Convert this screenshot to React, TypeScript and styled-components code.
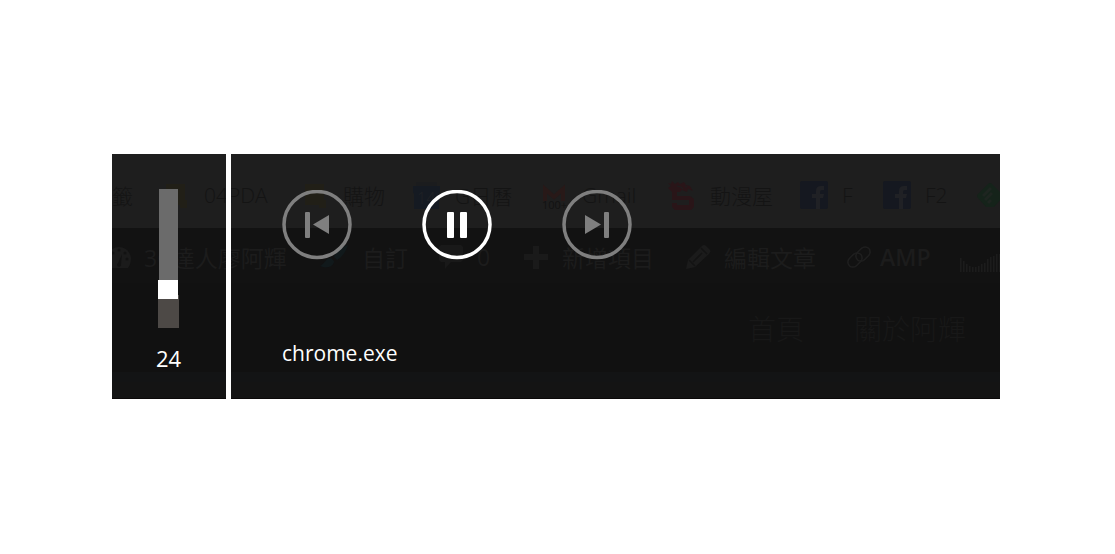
import React, { useState } from "react";
import styled, { createGlobalStyle } from "styled-components";

const GlobalStyle = createGlobalStyle`
  * { box-sizing: border-box; }
  body {
    margin: 0;
    background: #ffffff;
    font-family: "Open Sans", "Noto Sans CJK TC", sans-serif;
  }
`;

const Page = styled.main`
  padding: 154px 115px 0 112px;
`;

const Overlay = styled.section`
  display: grid;
  overflow: hidden;
  background: #111111;
`;

const Backdrop = styled.div`
  grid-area: 1 / 1;
  min-width: 0;
  overflow: hidden;
  display: flex;
  flex-direction: column;
  white-space: nowrap;
  border-bottom: 1px solid #0b0909;
`;

const Strip = styled.div`
  display: flex;
  align-items: center;
  flex: none;
`;

const BookmarkBar = styled(Strip)`
  height: 74px;
  padding-top: 8px;
  background: #1e1e1e;
  color: #141414;
  font-size: 21px;
  font-weight: 300;
`;

const AdminBar = styled(Strip)`
  height: 55px;
  padding-top: 2px;
  background: #121212;
  color: #1c1c1c;
  font-size: 23px;
`;

const SiteNav = styled(Strip)`
  height: 89px;
  justify-content: flex-end;
  gap: 50px;
  padding: 0 34px 0 0;
  background: #111111;
  color: #181818;
  font-size: 28px;
  font-weight: 300;
`;

const SiteFooter = styled.div`
  flex: 1;
  background: #141414;
  border-top: 10px solid #131415;
`;

const Item = styled.span<{ $width: number; $gap?: number; $bold?: boolean }>`
  display: flex;
  align-items: center;
  flex: none;
  width: ${(p) => p.$width}px;
  gap: ${(p) => p.$gap ?? 14}px;
  font-weight: ${(p) => (p.$bold ? 600 : "inherit")};
  svg { flex: none; overflow: visible; }
`;

const Panels = styled.div`
  grid-area: 1 / 1;
  z-index: 1;
  display: flex;
  color: #ffffff;
  font-size: 22px;
  line-height: 28px;
`;

const VolumePanel = styled.div`
  width: 114px;
  display: flex;
  flex-direction: column;
  align-items: center;
  padding: 35px 1px 27px 0;
  gap: 16px;
`;

const VolumeSlider = styled.input<{ $rest: number }>`
  appearance: none;
  writing-mode: vertical-lr;
  direction: rtl;
  width: 21px;
  height: 139px;
  margin: 0;
  cursor: pointer;
  background:
    linear-gradient(#6b6b6b, #6b6b6b) 1px 0 / 19px ${(p) => p.$rest}% no-repeat,
    linear-gradient(#4d4946, #4d4946) 0 100% / 21px ${(p) => 100 - p.$rest}% no-repeat;

  &::-webkit-slider-thumb {
    appearance: none;
    width: 20px;
    height: 19px;
    margin-right: 1px;
    border: 0;
    border-radius: 0;
    background: #ffffff;
  }
`;

const MediaPanel = styled.div`
  flex: 1;
  border-left: 5px solid #ffffff;
  padding: 36px 51px 32px;
  display: flex;
  flex-direction: column;
  gap: 79px;
`;

const Controls = styled.div`
  display: flex;
  gap: 70px;
`;

const MediaButton = styled.button<{ $active?: boolean }>`
  width: 70px;
  height: 70px;
  padding: 0;
  border: 0;
  border-radius: 50%;
  background: transparent;
  color: ${(p) => (p.$active ? "#ffffff" : "#7f7f7f")};
  cursor: pointer;
  svg { display: block; }
`;

const AppName = styled.div`
  font-size: 21px;
`;

const Ring = ({ children }: { children: React.ReactNode }) => (
  <svg width="70" height="70" viewBox="0 0 70 70" fill="currentColor" aria-hidden="true">
    <circle cx="35" cy="34.5" r="33" fill="none" stroke="currentColor" strokeWidth="3.5" />
    {children}
  </svg>
);

const NoteIcon = () => (
  <svg width="28" height="28" viewBox="0 0 28 28" fill="#211f17">
    <path d="M4 3h19v16h2v8h-7v-3H4z" />
  </svg>
);

const CalendarIcon = () => (
  <svg width="28" height="28" viewBox="0 0 28 28">
    <path d="M0 5h27v6l-1 2v15H1V13l-1-2z" fill="#151a22" />
    <path d="M3 1h21v4H3z" fill="#1b1c1e" />
    <text x="4" y="23" fontSize="16" fill="#202226">14</text>
  </svg>
);

const MailIcon = () => (
  <svg width="28" height="28" viewBox="0 0 28 28">
    <path d="M5 20V8l9 8 9-8v12" fill="none" stroke="#281918" strokeWidth="4" />
    <text x="2" y="28" fontSize="11" fontWeight="400" fill="#121212">100+</text>
  </svg>
);

const DragonIcon = () => (
  <svg width="28" height="28" viewBox="0 0 28 28" fill="#291518">
    <path d="M0 2l3 1 1-3 3 3 3-2 2 2 4-2 2 3 4 1 3 5-5-2-1 3-5-2-2 2H9v4h13l4 3v8l-3 3H7l-3-3v-4h5v2h12v-5H4v-8L0 7l3-2z" />
    <path d="M9 5l4 1 2 2M17 5l2 1" fill="none" stroke="#1e1e1e" />
  </svg>
);

const FacebookIcon = () => (
  <svg width="28" height="28" viewBox="0 0 28 28">
    <rect width="28" height="28" rx="2" fill="#151820" />
    <path d="M16 28V17h-4v-4h4v-3q0-5 5-5h3v4h-2q-2 0-2 2v2h4l-1 4h-3v11z" fill="#202125" />
  </svg>
);

const FeedIcon = () => (
  <svg width="28" height="28" viewBox="0 0 28 28">
    <path d="M12 3q2-2 4 0l10 10q2 2 0 4l-8 9h-8l-8-9q-2-2 0-4z" fill="#15231a" />
    <path d="M7 15l8-8M9 19l7-7M12 22l3-3" stroke="#1e2520" strokeWidth="3" />
  </svg>
);

const GaugeIcon = () => (
  <svg width="24" height="24" viewBox="0 0 24 24">
    <path d="M-2 23q-3-4-3-9a12 12 0 0 1 24 0q0 5-3 9z" fill="#1b1b1b" />
    <path d="M6 18l4-9-1 10a2 2 0 1 1-3-1z" fill="#121212" />
    <g fill="#121212">
      <circle cx="7" cy="5" r="1.5" />
      <circle cx="13" cy="8" r="1.5" />
      <circle cx="15" cy="14" r="1.5" />
      <circle cx="1" cy="8" r="1.5" />
    </g>
  </svg>
);

const BrushIcon = () => (
  <svg width="28" height="24" viewBox="0 0 28 24" fill="#11191b">
    <path d="M28 0c-7 2-12 6-14 12l3 3c5-3 9-8 11-15zM11 13c-6 0-5 5-11 8 6 3 14 1 14-5z" />
  </svg>
);

const CommentIcon = () => (
  <svg width="24" height="24" viewBox="0 0 24 24" fill="#191919">
    <path d="M2 0h20l2 2v13l-2 2H12l-6 7v-7H2l-2-2V2z" />
  </svg>
);

const PlusIcon = () => (
  <svg width="24" height="24" viewBox="0 0 24 24" fill="#1a1a1a">
    <path d="M9 1h6v8h9v6h-9v9H9v-9H0V9h9z" />
  </svg>
);

const PencilIcon = () => (
  <svg width="24" height="24" viewBox="0 0 24 24">
    <path d="M0 24l2-9L16 1q2-2 4 0l4 4q1 2-1 4L9 22z" fill="#1b1b1b" />
    <path d="M7 17l9-9M15 3l6 6M3 15l6 6" stroke="#131313" strokeWidth="1.5" />
  </svg>
);

const LinkIcon = () => (
  <svg width="24" height="24" viewBox="0 0 24 24" fill="none" stroke="#1f1f1f" strokeWidth="1.5">
    <rect x="0" y="10" width="16" height="10" rx="5" transform="rotate(-45 8 15)" />
    <rect x="8" y="4" width="16" height="10" rx="5" transform="rotate(-45 16 9)" />
  </svg>
);

const TRAFFIC = [14, 11, 8, 6, 5, 5, 6, 8, 9, 13, 15, 16, 18, 18, 17];

const TrafficIcon = () => (
  <svg width="44" height="30" viewBox="0 0 44 30" fill="#1c1c1c">
    {TRAFFIC.map((h, i) => (
      <rect key={i} x={1 + i * 3} y={30 - h} width="1.5" height={h} />
    ))}
  </svg>
);

export default function App() {
  const [volume, setVolume] = useState(24);
  const [playing, setPlaying] = useState(true);

  return (
    <>
      <GlobalStyle />
      <Page>
        <Overlay>
          <Backdrop aria-hidden="true">
            <BookmarkBar>
              <Item $width={50}>籤</Item>
              <Item $width={139}><NoteIcon />04PDA</Item>
              <Item $width={112}><NoteIcon />購物</Item>
              <Item $width={127}><CalendarIcon />G日曆</Item>
              <Item $width={128}><MailIcon />Gmail</Item>
              <Item $width={132}><DragonIcon />動漫屋</Item>
              <Item $width={83}><FacebookIcon />F</Item>
              <Item $width={93}><FacebookIcon />F2</Item>
              <Item $width={28}><FeedIcon /></Item>
            </BookmarkBar>
            <AdminBar>
              <Item $width={208} $gap={8}><GaugeIcon />3C達人廖阿輝</Item>
              <Item $width={119}><BrushIcon />自訂</Item>
              <Item $width={85}><CommentIcon />0</Item>
              <Item $width={162}><PlusIcon />新增項目</Item>
              <Item $width={161}><PencilIcon />編輯文章</Item>
              <Item $width={112} $gap={9} $bold><LinkIcon />AMP</Item>
              <Item $width={44}><TrafficIcon /></Item>
            </AdminBar>
            <SiteNav>
              <span>首頁</span>
              <span>關於阿輝</span>
            </SiteNav>
            <SiteFooter />
          </Backdrop>
          <Panels>
            <VolumePanel>
              <VolumeSlider
                id="volume"
                type="range"
                min={0}
                max={100}
                aria-label="Volume"
                value={volume}
                $rest={100 - volume}
                onChange={(e) => setVolume(Number(e.target.value))}
              />
              <output htmlFor="volume">{volume}</output>
            </VolumePanel>
            <MediaPanel>
              <Controls>
                <MediaButton aria-label="Previous">
                  <Ring>
                    <rect x="23" y="22" width="5" height="26" rx="1" />
                    <path d="M31 34.5L47 25v19z" />
                  </Ring>
                </MediaButton>
                <MediaButton $active aria-label={playing ? "Pause" : "Play"} onClick={() => setPlaying(!playing)}>
                  <Ring>
                    {playing ? (
                      <>
                        <rect x="25" y="22" width="7" height="26" rx="1" />
                        <rect x="38" y="22" width="7" height="26" rx="1" />
                      </>
                    ) : (
                      <path d="M27 22l20 12.5L27 47z" />
                    )}
                  </Ring>
                </MediaButton>
                <MediaButton aria-label="Next">
                  <Ring>
                    <path d="M39 34.5L23 25v19z" />
                    <rect x="42" y="22" width="5" height="26" rx="1" />
                  </Ring>
                </MediaButton>
              </Controls>
              <AppName>chrome.exe</AppName>
            </MediaPanel>
          </Panels>
        </Overlay>
      </Page>
    </>
  );
}
